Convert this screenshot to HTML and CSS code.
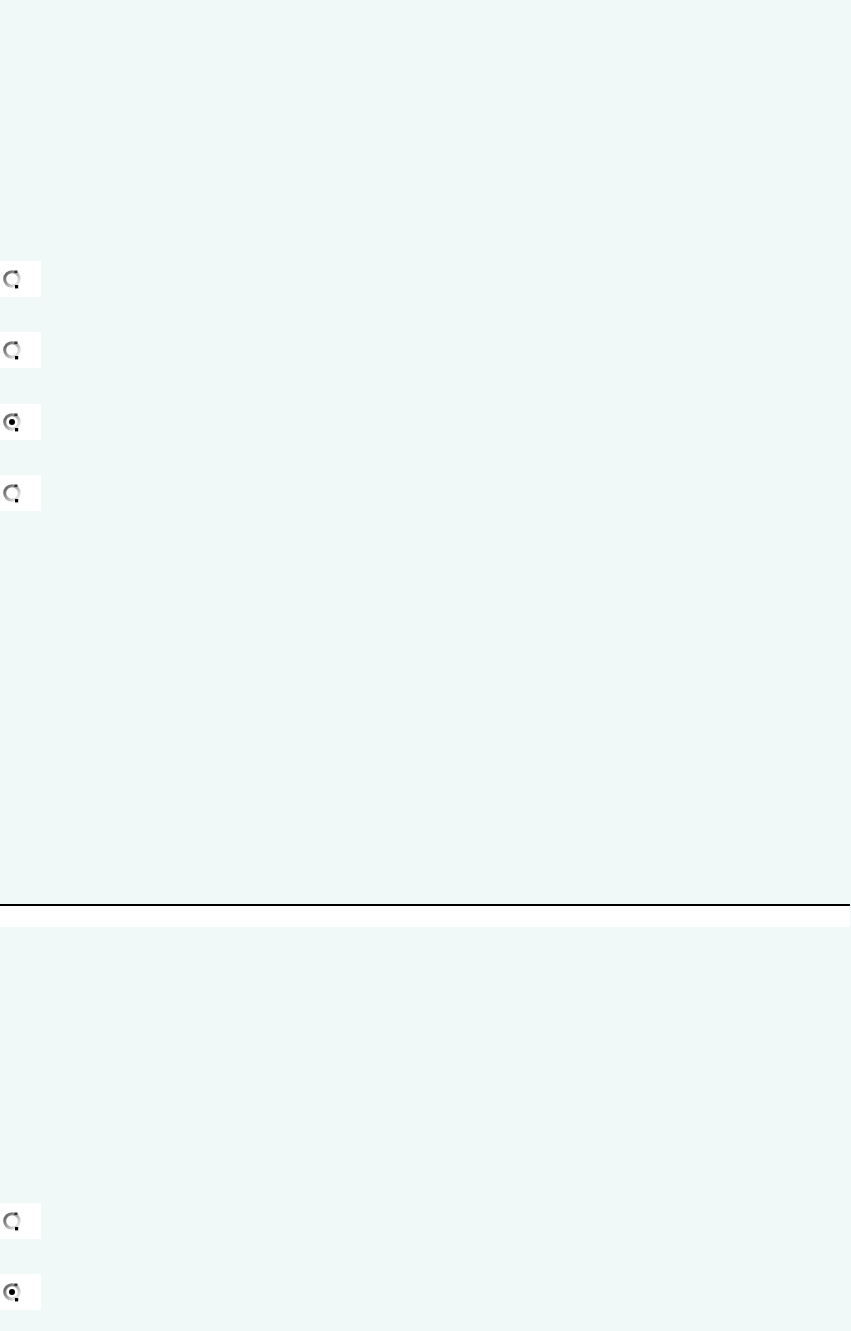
FILE: index.html
```html
<!DOCTYPE html>
<html>
<head>
<meta charset="utf-8">
<title>Options</title>
<link rel="stylesheet" href="styles.css">
</head>
<body>
<section class="panel panel-top">
  <div class="options">
    <label class="opt"><svg class="radio" viewBox="0 0 20 20"><use href="#ring"/></svg></label>
    <label class="opt"><svg class="radio" viewBox="0 0 20 20"><use href="#ring"/></svg></label>
    <label class="opt"><svg class="radio" viewBox="0 0 20 20"><use href="#ring"/><circle cx="10" cy="10" r="3" fill="#000"/></svg></label>
    <label class="opt"><svg class="radio" viewBox="0 0 20 20"><use href="#ring"/></svg></label>
  </div>
</section>
<hr class="rule">
<div class="strip"></div>
<section class="panel panel-bottom">
  <div class="options">
    <label class="opt"><svg class="radio" viewBox="0 0 20 20"><use href="#ring"/></svg></label>
    <label class="opt"><svg class="radio" viewBox="0 0 20 20"><use href="#ring"/><circle cx="10" cy="10" r="3" fill="#000"/></svg></label>
  </div>
</section>
<svg width="0" height="0" class="defs">
  <defs>
    <linearGradient id="rg" x1="0" y1="0" x2="1" y2="0.8">
      <stop offset="0" stop-color="#555"/>
      <stop offset="0.45" stop-color="#9a9a9a"/>
      <stop offset="1" stop-color="#ececec"/>
    </linearGradient>
    <g id="ring">
      <circle cx="10" cy="10" r="7.3" fill="#fff" stroke="url(#rg)" stroke-width="3"/>
      <rect x="12.3" y="1.5" width="3.2" height="2.5" fill="#333"/>
      <rect x="13" y="16" width="3.2" height="3.4" fill="#000"/>
    </g>
  </defs>
</svg>
</body>
</html>
```
FILE: styles.css
```css
html, body {
  margin: 0;
  padding: 0;
  background: #f1f8f8;
  font-family: "Liberation Sans", Arial, sans-serif;
}
.panel {
  display: flex;
  flex-direction: column;
}
.panel-top {
  height: 904px;
  padding-top: 261px;
  box-sizing: border-box;
}
.panel-bottom {
  padding-top: 276px;
}
.options {
  display: flex;
  flex-direction: column;
  gap: 35.33px;
}
.opt {
  display: flex;
  align-items: center;
  width: 41px;
  height: 36px;
  background: #fff;
  padding-left: 2px;
  box-sizing: border-box;
}
.radio {
  width: 20px;
  height: 20px;
  display: block;
}
.rule {
  margin: 0;
  border: 0;
  height: 2px;
  width: 850px;
  background: #000;
}
.strip {
  height: 21px;
  width: 850px;
  background: #fff;
}
.defs {
  position: absolute;
  width: 0;
  height: 0;
}
```
